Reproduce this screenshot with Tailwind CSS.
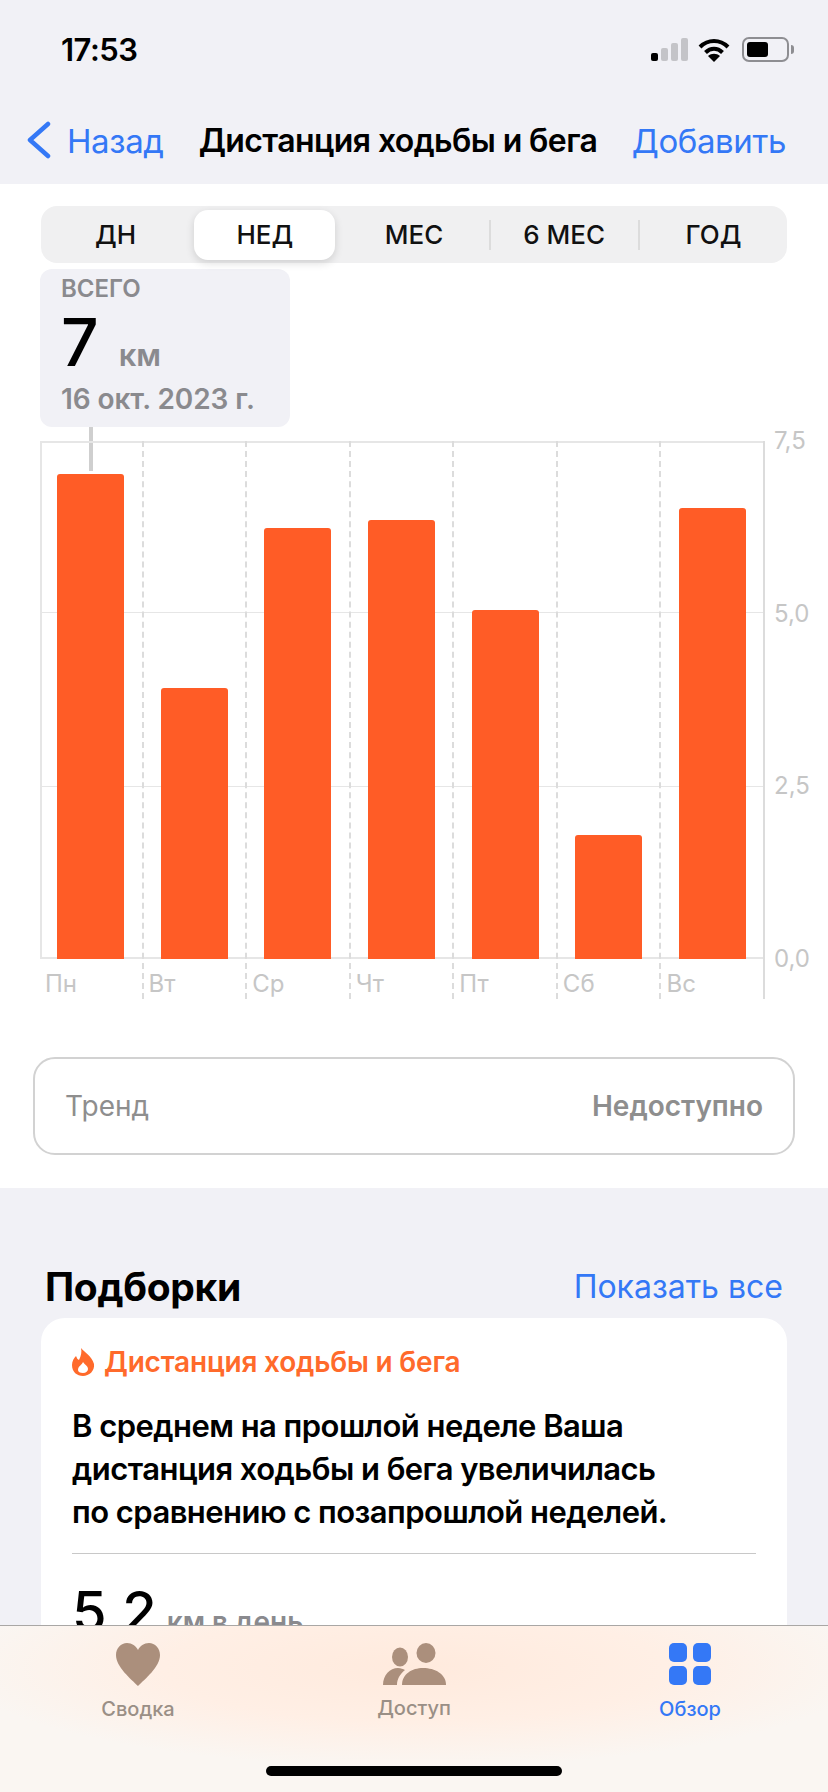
<!DOCTYPE html>
<html lang="ru">
<head>
<meta charset="utf-8">
<script src="https://cdn.jsdelivr.net/npm/@tailwindcss/browser@4"></script>
</head>
<body class="m-0">
<div class="relative w-[828px] h-[1792px] overflow-hidden bg-[#f1f1f6] font-['Inter','Liberation_Sans',sans-serif] text-black">

  <!-- status bar -->
  <div class="h-[100px] flex items-start justify-between pt-[32px] pl-[61px] pr-[34px]">
    <span class="text-[31px] leading-[36px] font-semibold tracking-[-0.5px]">17:53</span>
    <div class="flex items-center gap-[10px] pt-[5px]">
      <svg width="37" height="23" viewBox="0 0 37 23">
        <rect x="0" y="15" width="7" height="8" rx="2" fill="#000"/>
        <rect x="10" y="10" width="7" height="13" rx="2" fill="#c4c4c8"/>
        <rect x="20" y="5" width="7" height="18" rx="2" fill="#c4c4c8"/>
        <rect x="30" y="0" width="7" height="23" rx="2" fill="#c4c4c8"/>
      </svg>
      <svg width="32" height="24" viewBox="0 0 32 24" fill="none" stroke="#000" stroke-width="4">
        <path d="M2 9 C10 1 22 1 30 9"/>
        <path d="M7.5 14.5 C12.5 9.5 19.5 9.5 24.5 14.5"/>
        <path d="M10 18 L16 24 L22 18 C18.5 15 13.5 15 10 18Z" fill="#000" stroke="none"/>
      </svg>
      <div class="flex items-center gap-[2px] ml-[2px]">
        <div class="w-[47px] h-[25px] rounded-[7px] border-2 border-[#8e8e92] p-[3px]">
          <div class="w-[21px] h-full rounded-[3px] bg-black"></div>
        </div>
        <div class="w-[3px] h-[9px] rounded-r-[3px] bg-[#8e8e92]"></div>
      </div>
    </div>
  </div>

  <!-- nav bar -->
  <div class="h-[84px] relative flex items-start pt-[22px] pl-[26px] pr-[42px]">
    <svg width="25" height="38" viewBox="0 0 25 38" fill="none" stroke="#3478f6" stroke-width="4.5" stroke-linecap="round" stroke-linejoin="round" class="-mt-[1px]">
      <path d="M22 3 L4 19 L22 35"/>
    </svg>
    <span class="ml-[16px] text-[33px] leading-[38px] text-[#3478f6] tracking-[-0.4px]">Назад</span>
    <span class="ml-[35px] text-[32px] leading-[38px] font-semibold tracking-[-0.6px] whitespace-nowrap">Дистанция ходьбы и бега</span>
    <span class="ml-auto text-[33px] leading-[38px] text-[#3478f6] tracking-[-0.4px]">Добавить</span>
  </div>

  <!-- main white section -->
  <div class="h-[1004px] bg-white pt-[22px]">
    <!-- segmented control -->
    <div class="relative mx-[41px] h-[57px] rounded-[16px] bg-[#f0f0f1] grid grid-cols-5 items-center text-[26px] font-medium text-center text-[#111]">
      <div>ДН</div>
      <div class="relative z-10 mx-[4px] h-[50px] flex items-center justify-center bg-white rounded-[14px] shadow-[0_3px_8px_rgba(0,0,0,0.14)]">НЕД</div>
      <div>МЕС</div>
      <div class="border-l-2 border-[#dcdcdc] leading-[30px]">6 МЕС</div>
      <div class="border-l-2 border-[#dcdcdc] leading-[30px]">ГОД</div>
    </div>

    <!-- tooltip -->
    <div class="relative ml-[40px] mt-[6px] w-[250px] h-[158px] rounded-[12px] bg-[#f1f1f6] pl-[21px] pt-[6px]">
      <div class="text-[24px] leading-[28px] font-semibold text-[#8a8a8e]">ВСЕГО</div>
      <div class="flex items-baseline h-[76px] pt-[2px]">
        <span class="text-[66px] leading-[74px] font-medium">7</span>
        <span class="ml-[20px] text-[31px] font-semibold text-[#8a8a8e]">км</span>
      </div>
      <div class="mt-[2px] text-[28px] leading-[36px] font-semibold text-[#8a8a8e] whitespace-nowrap tracking-[-0.1px]">16 окт. 2023 г.</div>
      <div class="absolute left-[49px] top-[158px] w-[4px] h-[44px] bg-[#cfcfcf]"></div>
    </div>

    <!-- chart -->
    <div class="relative ml-[40px] mt-[14px] flex">
      <div class="relative w-[725px] h-[558px]">
        <div class="absolute left-0 top-0 w-full h-[518px] grid grid-rows-3 border-t-2 border-b-2 border-l-2 border-[#e6e6e6]">
          <div class="border-b border-[#e6e6e6] h-[170px]"></div>
          <div class="border-b border-[#e6e6e6] h-[173px]"></div>
          <div></div>
        </div>
        <div class="relative grid grid-cols-7 h-full">
          <div class="border-r-2 border-dashed border-[#dcdcdc]">
            <div class="h-[518px] flex items-end justify-center pr-[1px]"><div class="w-[67px] h-[485px] bg-[#ff5c26] rounded-t-[3px]"></div></div>
            <div class="pl-[5px] pt-[10px] text-[24px] leading-[30px] text-[#c6c6c6]">Пн</div>
          </div>
          <div class="border-r-2 border-dashed border-[#dcdcdc]">
            <div class="h-[518px] flex items-end justify-center"><div class="w-[67px] h-[271px] bg-[#ff5c26] rounded-t-[3px]"></div></div>
            <div class="pl-[5px] pt-[10px] text-[24px] leading-[30px] text-[#c6c6c6]">Вт</div>
          </div>
          <div class="border-r-2 border-dashed border-[#dcdcdc]">
            <div class="h-[518px] flex items-end justify-center"><div class="w-[67px] h-[431px] bg-[#ff5c26] rounded-t-[3px]"></div></div>
            <div class="pl-[5px] pt-[10px] text-[24px] leading-[30px] text-[#c6c6c6]">Ср</div>
          </div>
          <div class="border-r-2 border-dashed border-[#dcdcdc]">
            <div class="h-[518px] flex items-end justify-center"><div class="w-[67px] h-[439px] bg-[#ff5c26] rounded-t-[3px]"></div></div>
            <div class="pl-[5px] pt-[10px] text-[24px] leading-[30px] text-[#c6c6c6]">Чт</div>
          </div>
          <div class="border-r-2 border-dashed border-[#dcdcdc]">
            <div class="h-[518px] flex items-end justify-center"><div class="w-[67px] h-[349px] bg-[#ff5c26] rounded-t-[3px]"></div></div>
            <div class="pl-[5px] pt-[10px] text-[24px] leading-[30px] text-[#c6c6c6]">Пт</div>
          </div>
          <div class="border-r-2 border-dashed border-[#dcdcdc]">
            <div class="h-[518px] flex items-end justify-center"><div class="w-[67px] h-[124px] bg-[#ff5c26] rounded-t-[3px]"></div></div>
            <div class="pl-[5px] pt-[10px] text-[24px] leading-[30px] text-[#c6c6c6]">Сб</div>
          </div>
          <div class="border-r-2 border-[#dcdcdc]">
            <div class="h-[518px] flex items-end justify-center"><div class="w-[67px] h-[451px] bg-[#ff5c26] rounded-t-[3px]"></div></div>
            <div class="pl-[5px] pt-[10px] text-[24px] leading-[30px] text-[#c6c6c6]">Вс</div>
          </div>
        </div>
      </div>
      <div class="ml-[9px] -mt-[15px] h-[548px] flex flex-col justify-between text-[24px] leading-[30px] text-[#c6c6c6]">
        <span>7,5</span><span>5,0</span><span>2,5</span><span>0,0</span>
      </div>
    </div>

    <!-- trend -->
    <div class="mx-[33px] mt-[58px] h-[98px] rounded-[22px] border-2 border-[#d2d2d2] flex items-center justify-between pl-[30px] pr-[30px] text-[28px] text-[#8e8e8e]">
      <span>Тренд</span>
      <span class="font-semibold">Недоступно</span>
    </div>
  </div>

  <!-- highlights -->
  <div class="flex items-center justify-between pl-[45px] pr-[45px] pt-[68px] h-[130px]">
    <span class="text-[39px] leading-[50px] font-bold tracking-[-0.3px]">Подборки</span>
    <span class="text-[32px] leading-[50px] text-[#3478f6]">Показать все</span>
  </div>
  <div class="mx-[41px] h-[500px] rounded-[24px] bg-white px-[31px] pt-[26px]">
    <div class="flex items-center gap-[9px] h-[36px] -ml-[1px]">
      <svg width="24" height="28" viewBox="0 0 24 28">
        <path fill-rule="evenodd" fill="#ff6a2b" d="M10 0 C13 4 21 8 23 16 C24 23 18 28 12 28 C6 28 1 24 1 17 C1 13 3 10 5 8 C6 10 6 11 8 12 C10 8 11 4 10 0 Z M12 14 C11 17 7 18 7 22 C7 24 9 25 12 25 C15 25 17 23 17 21 C17 18 14 17 12 14 Z"/>
      </svg>
      <span class="text-[28px] leading-[36px] font-semibold text-[#ff6a2b] tracking-[-0.2px]">Дистанция ходьбы и бега</span>
    </div>
    <div class="mt-[24px] text-[31px] leading-[43px] font-semibold text-black tracking-[-0.55px] whitespace-nowrap">
      <div>В среднем на прошлой неделе Ваша</div>
      <div>дистанция ходьбы и бега увеличилась</div>
      <div>по сравнению с позапрошлой неделей.</div>
    </div>
    <div class="mt-[20px] h-px bg-[#c8c8c8]"></div>
    <div class="mt-[26px] flex items-baseline">
      <span class="text-[56px] leading-[64px] font-medium">5,2</span>
      <span class="ml-[10px] text-[28px] font-semibold text-[#8a8a8e]">км в день</span>
    </div>
  </div>

  <!-- tab bar overlay -->
  <div class="absolute left-0 bottom-0 w-full h-[167px] border-t border-[#a9a7a5] bg-[radial-gradient(ellipse_55%_60%_at_50%_25%,#ffeadd_0%,#ffefe5_55%,#faf6f2_100%)]">
    <div class="grid grid-cols-3 pt-[17px]">
      <div class="flex flex-col items-center">
        <svg width="46" height="43" viewBox="0 0 46 43"><path fill="#ab8f7c" d="M23 43 C16 36 1 24 1 12 C1 5 6 0 12 0 C17 0 21 3 23 7 C25 3 29 0 34 0 C40 0 45 5 45 12 C45 24 30 36 23 43 Z"/></svg>
        <span class="mt-[9px] text-[20px] leading-[28px] font-medium text-[#9a8f86]">Сводка</span>
      </div>
      <div class="flex flex-col items-center">
        <svg width="63" height="42" viewBox="0 0 63 42" fill="#ab8f7c">
          <ellipse cx="17" cy="12" rx="8" ry="9.5" transform="translate(0 2)"/>
          <ellipse cx="43" cy="10" rx="9.5" ry="10"/>
          <path d="M0 42 C0 32 7 25 15 25 C18 25 20 26 22 27 C17 31 14 36 14 42 Z"/>
          <path d="M19 42 C19 31 29 25 40 25 C52 25 63 31 63 42 Z"/>
        </svg>
        <span class="mt-[9px] text-[20px] leading-[28px] font-medium text-[#9a8f86]">Доступ</span>
      </div>
      <div class="flex flex-col items-center">
        <div class="grid grid-cols-[18px_18px] grid-rows-[19px_19px] gap-x-[6px] gap-y-[4px] h-[42px]">
          <div class="rounded-[5px] bg-[#3478f6]"></div>
          <div class="rounded-[5px] bg-[#3478f6]"></div>
          <div class="rounded-[5px] bg-[#3478f6]"></div>
          <div class="rounded-[5px] bg-[#3478f6]"></div>
        </div>
        <span class="mt-[10px] text-[20px] leading-[28px] font-medium text-[#3478f6]">Обзор</span>
      </div>
    </div>
    <div class="absolute left-[266px] bottom-[16px] w-[296px] h-[10px] rounded-full bg-black"></div>
  </div>
</div>
</body>
</html>
